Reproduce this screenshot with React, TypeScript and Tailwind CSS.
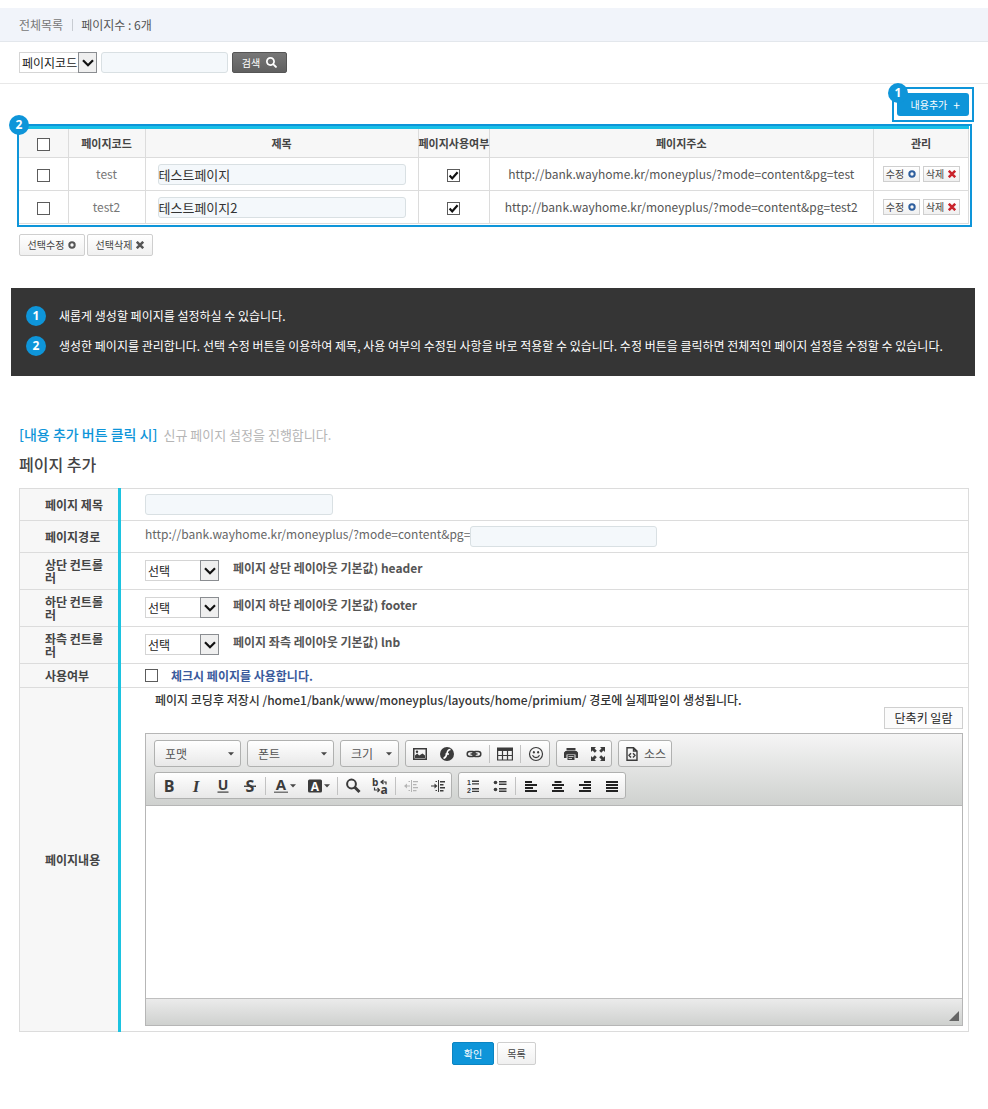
import type { ReactNode } from "react";
import { FaSearch } from "react-icons/fa";

const pages = [
  { code: "test", title: "테스트페이지" },
  { code: "test2", title: "테스트페이지2" },
];

const layouts = [
  { id: "top", label: "상단 컨트롤러", hint: "페이지 상단 레이아웃 기본값) header" },
  { id: "bottom", label: "하단 컨트롤러", hint: "페이지 하단 레이아웃 기본값) footer" },
  { id: "left", label: "좌측 컨트롤러", hint: "페이지 좌측 레이아웃 기본값) lnb" },
];

const BASE_URL = "http://bank.wayhome.kr/moneyplus/?mode=content&pg=";

const field = "h-[21px] rounded-[3px] border border-[#d9e0e3] bg-[#f4f8fb] text-[#333] outline-none";

function Badge({ n, className = "" }: { n: number; className?: string }) {
  return (
    <span
      className={`flex size-5 shrink-0 items-center justify-center rounded-full bg-[#0e95d9] font-['Open_Sans',sans-serif] text-xs font-bold text-white ${className}`}
    >
      {n}
    </span>
  );
}

function Check({ label, id, checked = false }: { label?: string; id?: string; checked?: boolean }) {
  return (
    <span className="relative inline-block size-[13px] align-middle">
      <input
        type="checkbox"
        id={id}
        aria-label={label}
        defaultChecked={checked}
        className="peer block size-[13px] appearance-none border border-[#5c5c5c] bg-white"
      />
      <svg
        viewBox="0 0 13 13"
        className="pointer-events-none absolute inset-0 hidden size-[13px] peer-checked:block"
        fill="none"
        stroke="#111"
        strokeWidth="2.2"
      >
        <path d="M2.6 6.6 5.2 9.4 10.6 3.2" />
      </svg>
    </span>
  );
}

function Select({ id, label, option, className }: { id: string; label?: string; option: string; className: string }) {
  return (
    <span className={`relative block h-[21px] shrink-0 ${className}`}>
      <select
        id={id}
        aria-label={label}
        className="block h-full w-full appearance-none border border-[#d5d5d5] bg-white pl-[2px] text-xs leading-[18px] text-[#222]"
      >
        <option>{option}</option>
      </select>
      <span className="pointer-events-none absolute inset-y-0 right-0 flex w-[19px] items-center justify-center border border-[#8a8d91] bg-[#efefef]">
        <svg viewBox="0 0 12 8" className="w-3" fill="none" stroke="#111" strokeWidth="2.2">
          <path d="M1 1.2 6 6.2 11 1.2" />
        </svg>
      </span>
    </span>
  );
}

function Ring({ className }: { className: string }) {
  return (
    <svg viewBox="0 0 8 8" className={`size-2 ${className}`} fill="none" stroke="currentColor" strokeWidth="2">
      <circle cx="4" cy="4" r="2.7" />
    </svg>
  );
}

function Cross({ className }: { className: string }) {
  return (
    <svg viewBox="0 0 8 8" className={`size-2 ${className}`} fill="none" stroke="currentColor" strokeWidth="2.5">
      <path d="M.8.8 7.2 7.2M7.2.8.8 7.2" />
    </svg>
  );
}

const lightButton =
  "flex items-center justify-center gap-1 whitespace-nowrap border border-[#cfcfcf] bg-linear-to-b from-white to-[#f0f0f0] text-[10px] text-[#444]";

function Group({ children }: { children: ReactNode }) {
  return (
    <div className="flex h-[27px] items-center rounded-[3px] border border-[#b0b1b0] bg-linear-to-b from-white to-[#e8e8e8]">
      {children}
    </div>
  );
}

function Sep() {
  return (
    <span className="flex h-[18px] w-1 justify-center">
      <span className="w-px bg-[#c2c2c2]" />
    </span>
  );
}

function Caret() {
  return (
    <svg viewBox="0 0 6 4" className="h-[4px] w-[6px] shrink-0" fill="#474747">
      <path d="M0 .3h6L3 3.6z" />
    </svg>
  );
}

function Combo({ label, className }: { label: string; className: string }) {
  return (
    <button
      type="button"
      className={`flex h-[27px] items-center justify-between rounded-[3px] border border-[#b0b1b0] bg-linear-to-b from-white to-[#e8e8e8] pr-[6px] pl-[10px] text-xs text-[#555] ${className}`}
    >
      {label}
      <Caret />
    </button>
  );
}

function Tool({ label, wide = false, children }: { label: string; wide?: boolean; children: ReactNode }) {
  return (
    <button
      type="button"
      aria-label={label}
      className={`flex h-full items-center justify-center gap-px ${wide ? "w-[34px]" : "w-[27px]"}`}
    >
      <svg viewBox="0 0 16 16" className="size-4 shrink-0 overflow-visible" fill="#3b3b3b">
        {children}
      </svg>
      {wide && <Caret />}
    </button>
  );
}

const glyph = "font-['Open_Sans',sans-serif] font-bold";

function Toolbar() {
  return (
    <div className="flex flex-col gap-[5px] border-b border-[#b6b6b6] bg-linear-to-b from-[#f5f5f5] to-[#cfd1cf] px-2 py-[6px]">
      <div className="flex flex-wrap gap-[6px]">
        <Combo label="포맷" className="w-[87px]" />
        <Combo label="폰트" className="w-[87px]" />
        <Combo label="크기" className="w-[59px]" />
        <Group>
          <Tool label="이미지">
            <path fillRule="evenodd" d="M1 2h14v12H1zM2.500 3.500v9h11v-9zM3 12l0-2.500 2.200-2 2 2 3.300-2L13 9.500V12z" />
            <circle cx="5" cy="5.700" r="1.200" />
          </Tool>
          <Tool label="플래시">
            <circle cx="8" cy="8" r="7" />
            <path d="M11.500 3.500C8.500 3.500 8.300 6 7.800 8S6.500 12 4.500 12.300M6.500 8H10" fill="none" stroke="#fff" strokeWidth="1.600" />
          </Tool>
          <Tool label="링크">
            <g fill="none" stroke="#3b3b3b" strokeWidth="1.500">
              <rect x="1.200" y="5.500" width="8" height="5" rx="2.500" />
              <rect x="6.800" y="5.500" width="8" height="5" rx="2.500" />
              <path d="M4.500 8h7" />
            </g>
          </Tool>
          <Sep />
          <Tool label="표">
            <path d="M0 1.500h16v3.500H0z" />
            <path d="M.6 5v9h14.800V5M5.500 5v9M10.500 5v9M.6 9.500h14.800" fill="none" stroke="#3b3b3b" strokeWidth="1.200" />
          </Tool>
          <Sep />
          <Tool label="이모티콘">
            <circle cx="8" cy="8" r="6.500" fill="none" stroke="#3b3b3b" strokeWidth="1.200" />
            <ellipse cx="5.900" cy="6.200" rx="1" ry="1.200" />
            <ellipse cx="10.100" cy="6.200" rx="1" ry="1.200" />
            <path d="M4.500 9.300c1.500 3 5.500 3 7 0" fill="none" stroke="#3b3b3b" strokeWidth="1.200" />
          </Tool>
        </Group>
        <Group>
          <Tool label="인쇄">
            <path d="M3.500 2h9v2.500h-9zM2.500 5h11L15 6.500V12h-2.500V8.500h-9V12H1V6.500z" />
            <path fillRule="evenodd" d="M4.500 9h7v5h-7zM5.500 10.200v.8h5v-.8zM5.500 12v.8h3.500V12z" />
          </Tool>
          <Tool label="최대화">
            <path d="M1 1h5L4.500 2.500l2.300 2.300-2 2-2.300-2.300L1 6zM15 1v5l-1.500-1.500-2.300 2.300-2-2 2.300-2.300L10 1zM1 15v-5l1.500 1.500 2.300-2.300 2 2-2.300 2.300L6 15zM15 15h-5l1.500-1.500-2.300-2.300 2-2 2.300 2.300L15 10z" />
          </Tool>
        </Group>
        <button
          type="button"
          className="flex h-[27px] items-center gap-1 rounded-[3px] border border-[#b0b1b0] bg-linear-to-b from-white to-[#e8e8e8] px-[5px] text-xs text-[#555]"
        >
          <svg viewBox="0 0 16 16" className="size-4" fill="none" stroke="#3b3b3b" strokeWidth="1.400">
            <path d="M3 1.700h6.500L13 5v9.300H3zM9.500 1.700V5H13M7 7.200 5 9.300l2 2.100M9 7.200l2 2.100-2 2.100" />
          </svg>
          소스
        </button>
      </div>
      <div className="flex flex-wrap gap-[6px]">
        <Group>
          <Tool label="굵게">
            <text x="8" y="13.500" textAnchor="middle" fontSize="16" className={glyph}>B</text>
          </Tool>
          <Tool label="기울임">
            <text x="8" y="13.500" textAnchor="middle" fontSize="17" className="font-['Liberation_Serif',serif] font-bold italic">I</text>
          </Tool>
          <Tool label="밑줄">
            <text x="8" y="12" textAnchor="middle" fontSize="14" className={glyph}>U</text>
            <path d="M2.500 13.500h11v1.200h-11z" />
          </Tool>
          <Tool label="취소선">
            <text x="8" y="13.500" textAnchor="middle" fontSize="16" className={glyph}>S</text>
            <path d="M2 7.600h12v1.300H2z" />
          </Tool>
          <Sep />
          <Tool label="글자색" wide>
            <text x="8" y="12" textAnchor="middle" fontSize="15" className={glyph}>A</text>
            <path d="M1 13.500h14V15H1z" fill="#777" />
          </Tool>
          <Tool label="배경색" wide>
            <rect x="1" y="1.500" width="14" height="13" rx="1.500" />
            <text x="8" y="12.500" textAnchor="middle" fontSize="12" fill="#fff" className={glyph}>A</text>
          </Tool>
          <Sep />
          <Tool label="찾기">
            <circle cx="6.500" cy="6" r="4.400" fill="none" stroke="#3b3b3b" strokeWidth="2" />
            <path d="m9.500 9 5 5" stroke="#3b3b3b" strokeWidth="3" />
          </Tool>
          <Tool label="바꾸기">
            <text x="0" y="8" fontSize="10" className={glyph}>b</text>
            <text x="8.500" y="15.500" fontSize="12" className={glyph}>a</text>
            <path d="M14 6.500V4H9.500M11.500 2 9 4l2.500 2M2.500 9.500V12H7M5.500 10l2 2-2 2" fill="none" stroke="#3b3b3b" strokeWidth="1.200" />
          </Tool>
          <Sep />
          <Tool label="내어쓰기">
            <path d="M8 2h1v12H8zM10 3h5v1.200h-5zM10 6h3.500v1.200H10zM10 9h5v1.200h-5zM10 12h3.500v1.200H10zM5.500 3H7v1H5.500zM5.500 12H7v1H5.500zM1 8l3-2.500v2h3v1H4v2z" fill="#b5b5b5" />
          </Tool>
          <Tool label="들여쓰기">
            <path d="M8 2h1v12H8zM10 3h5v1.400h-5zM10 6h3.500v1.400H10zM10 9h5v1.400h-5zM10 12h3.500v1.400H10zM5.500 3H7v1H5.500zM5.500 12H7v1H5.500zM7.500 8l-3-2.500v2H1v1h3.500v2z" />
          </Tool>
        </Group>
        <Group>
          <Tool label="번호 목록">
            <text x="2" y="6.500" fontSize="7" className="font-['Liberation_Sans',sans-serif] font-bold">1</text>
            <text x="2" y="15" fontSize="7" className="font-['Liberation_Sans',sans-serif] font-bold">2</text>
            <path d="M7 2.500h7v1.400H7zM7 5.200h7v1.400H7zM7 10h7v1.400H7zM7 12.700h7v1.400H7z" />
          </Tool>
          <Tool label="글머리 목록">
            <circle cx="3.500" cy="4.500" r="1.800" />
            <circle cx="3.500" cy="11.500" r="1.800" />
            <path d="M7 3h7.500v1.400H7zM7 5.500h7.500v1.400H7zM7 10h7.500v1.400H7zM7 12.500h7.500v1.400H7z" />
          </Tool>
          <Sep />
          <Tool label="왼쪽 정렬">
            <path d="M2 3h7v2H2zM2 6h12v2H2zM2 9h8v2H2zM2 12h12v2H2z" fill="#222" />
          </Tool>
          <Tool label="가운데 정렬">
            <path d="M4.500 3h7v2h-7zM2 6h12v2H2zM4 9h8v2H4zM2 12h12v2H2z" fill="#222" />
          </Tool>
          <Tool label="오른쪽 정렬">
            <path d="M7 3h7v2H7zM2 6h12v2H2zM6 9h8v2H6zM2 12h12v2H2z" fill="#222" />
          </Tool>
          <Tool label="양쪽 정렬">
            <path d="M2 3h12v2H2zM2 6h12v2H2zM2 9h12v2H2zM2 12h12v2H2z" fill="#222" />
          </Tool>
        </Group>
      </div>
    </div>
  );
}

function FormRow({ label, htmlFor, height, children }: { label: string; htmlFor: string; height: string; children: ReactNode }) {
  return (
    <tr className={`${height} border-b border-[#dcdcdc]`}>
      <th
        scope="row"
        className="border-r-3 border-[#1cc3e0] bg-[#f7f7f7] py-0 pr-[11px] pl-[25px] text-left align-middle leading-[13px] font-bold text-[#444]"
      >
        <label htmlFor={htmlFor}>{label}</label>
      </th>
      <td className="py-0 pr-[5px] pl-6 align-top">{children}</td>
    </tr>
  );
}

export default function App() {
  const headCell = "border-r border-[#dcdcdc] font-bold whitespace-nowrap text-[11px] text-[#444]";
  const bodyCell = "border-r border-[#dcdcdc]";

  return (
    <main className="bg-white pt-2 pb-11 font-['Noto_Sans_CJK_KR',sans-serif] text-xs text-[#555]">
      <header className="flex h-[34px] items-center border-b border-[#e3e7ec] bg-[#f1f4fa] px-[19px] leading-4">
        <span className="border-r border-[#c8ccd2] pr-[9px] leading-3 text-[#777]">전체목록</span>
        <span className="pl-2">페이지수 : 6개</span>
      </header>

      <form className="flex h-[42px] items-center border-b border-[#e8e8e8] px-[19px]">
        <Select id="search-type" label="검색 조건" option="페이지코드" className="w-[78px]" />
        <input type="text" aria-label="검색어" className={`${field} mr-1 ml-1 w-[127px]`} />
        <button
          type="button"
          className="flex h-[21px] w-[55px] items-center justify-center gap-[6px] rounded-xs border border-[#555] bg-linear-to-b from-[#777] to-[#606060] text-[10px] text-white"
        >
          검색
          <FaSearch className="size-[11px]" />
        </button>
      </form>

      <div className="mt-[3px] flex justify-end px-[14px]">
        <div className="relative border-2 border-[#0e95d9] px-[3px] py-1">
          <button
            type="button"
            className="flex h-[23px] w-[72px] items-center justify-end gap-[6px] rounded-[3px] bg-[#0e95d9] pr-[9px] text-[10px] text-white"
          >
            내용추가 <span className="text-xs leading-3">+</span>
          </button>
          <Badge n={1} className="absolute -top-[6px] -left-[6px]" />
        </div>
      </div>

      <div className="relative mt-[2px] mr-4 ml-[17px] border-2 border-[#0e95d9] pr-px pb-px">
        <table className="w-full table-fixed border-collapse text-center">
          <colgroup>
            <col className="w-[49px]" />
            <col className="w-[77px]" />
            <col className="w-[273px]" />
            <col className="w-[71px]" />
            <col />
            <col className="w-[95px]" />
          </colgroup>
          <thead>
            <tr className="h-[30px] border-t-3 border-b border-t-[#18c0e6] border-b-[#dcdcdc] bg-[#f7f7f7]">
              <th className={headCell}><Check label="전체 선택" /></th>
              <th className={headCell}>페이지코드</th>
              <th className={headCell}>제목</th>
              <th className={headCell}>페이지사용여부</th>
              <th className={headCell}>페이지주소</th>
              <th className={headCell}>관리</th>
            </tr>
          </thead>
          <tbody>
            {pages.map((p) => (
              <tr key={p.code} className="h-[33px] border-b border-[#dcdcdc]">
                <td className={bodyCell}><Check label={`${p.code} 선택`} /></td>
                <td className={`${bodyCell} text-[#777]`}>{p.code}</td>
                <td className={`${bodyCell} px-3`}>
                  <input type="text" aria-label="제목" defaultValue={p.title} className={`${field} block w-full text-[13px]`} />
                </td>
                <td className={bodyCell}><Check label="페이지사용여부" checked /></td>
                <td className={`${bodyCell} text-[#555]`}>{BASE_URL}{p.code}</td>
                <td className={bodyCell}>
                  <div className="flex justify-center gap-[3px]">
                    <button type="button" className={`${lightButton} h-4 w-[37px]`}>
                      수정<Ring className="text-[#2f5f9e]" />
                    </button>
                    <button type="button" className={`${lightButton} h-4 w-[37px]`}>
                      삭제<Cross className="text-[#c9232b]" />
                    </button>
                  </div>
                </td>
              </tr>
            ))}
          </tbody>
        </table>
        <Badge n={2} className="absolute -top-[11px] -left-[10px]" />
      </div>

      <div className="mt-[7px] flex gap-[2px] px-[19px]">
        <button type="button" className={`${lightButton} h-[22px] w-[66px] rounded-xs`}>
          선택수정<Ring className="text-[#555]" />
        </button>
        <button type="button" className={`${lightButton} h-[22px] w-[66px] rounded-xs`}>
          선택삭제<Cross className="text-[#555]" />
        </button>
      </div>

      <ol className="mt-8 mr-[13px] ml-[11px] flex flex-col gap-[10px] bg-[#353535] px-[15px] pt-[18px] pb-5 text-white">
        <li className="flex items-center gap-[13px]">
          <Badge n={1} />
          <span className="leading-5">새롭게 생성할 페이지를 설정하실 수 있습니다.</span>
        </li>
        <li className="flex items-center gap-[13px]">
          <Badge n={2} />
          <span className="leading-5">
            생성한 페이지를 관리합니다. 선택 수정 버튼을 이용하여 제목, 사용 여부의 수정된 사항을 바로 적용할 수 있습니다. 수정 버튼을 클릭하면 전체적인 페이지 설정을 수정할 수 있습니다.
          </span>
        </li>
      </ol>

      <section className="px-[19px] pt-[46px]">
        <p className="flex items-baseline gap-[6px] leading-6">
          <span className="text-sm leading-6 font-medium text-[#0e95d9]">[내용 추가 버튼 클릭 시]</span>
          <span className="text-[13px] text-[#b5b5b5]">신규 페이지 설정을 진행합니다.</span>
        </p>
        <h2 className="mt-[5px] mb-3 text-base leading-6 font-medium text-[#444]">페이지 추가</h2>

        <table className="w-full table-fixed border-collapse border border-[#dcdcdc]">
          <colgroup>
            <col className="w-[100px]" />
            <col />
          </colgroup>
          <tbody>
            <FormRow label="페이지 제목" htmlFor="page-title" height="h-8">
              <input id="page-title" type="text" className={`${field} mt-[5px] block w-[188px]`} />
            </FormRow>
            <FormRow label="페이지경로" htmlFor="page-path" height="h-8">
              <div className="flex items-start pt-[5px] text-[#666]">
                <span className="leading-4">{BASE_URL}</span>
                <input id="page-path" type="text" className={`${field} w-[187px]`} />
              </div>
            </FormRow>
            {layouts.map((l) => (
              <FormRow key={l.id} label={l.label} htmlFor={l.id} height="h-[37px]">
                <div className="flex items-start gap-[14px] pt-[7px]">
                  <Select id={l.id} option="선택" className="w-[74px]" />
                  <span className="leading-4 font-bold text-[#555]">{l.hint}</span>
                </div>
              </FormRow>
            ))}
            <FormRow label="사용여부" htmlFor="page-use" height="h-6">
              <div className="flex h-[23px] items-center gap-[13px]">
                <Check id="page-use" />
                <span className="font-bold text-[#3a5a9c]">체크시 페이지를 사용합니다.</span>
              </div>
            </FormRow>
            <FormRow label="페이지내용" htmlFor="page-content" height="h-[344px]">
              <div className="flex items-start justify-between pt-[2px] pl-[10px]">
                <span className="leading-5 font-medium text-[#333]">
                  페이지 코딩후 저장시 /home1/bank/www/moneyplus/layouts/home/primium/ 경로에 실제파일이 생성됩니다.
                </span>
                <button
                  type="button"
                  className="mt-[17px] h-[22px] w-[79px] shrink-0 border border-[#cfcfcf] bg-[#fbfbfb] text-xs text-[#222]"
                >
                  단축키 일람
                </button>
              </div>
              <div className="mt-1 mb-1 border border-[#b6b6b6]">
                <Toolbar />
                <textarea id="page-content" className="block h-[192px] w-full resize-none bg-white p-2 outline-none" />
                <div className="flex h-[27px] items-end justify-end border-t border-[#bfbfbf] bg-linear-to-b from-[#ebebeb] to-[#cfd1cf] pr-[3px] pb-1">
                  <svg viewBox="0 0 10 10" className="size-[10px]" fill="#666">
                    <path d="M10 0v10H0z" />
                  </svg>
                </div>
              </div>
            </FormRow>
          </tbody>
        </table>

        <div className="mt-[10px] flex justify-center gap-[3px]">
          <button type="button" className="h-[23px] w-[42px] rounded-xs border border-[#0b84c2] bg-[#0e95d9] text-[10px] text-white">
            확인
          </button>
          <button type="button" className={`${lightButton} h-[23px] w-[39px] rounded-xs`}>
            목록
          </button>
        </div>
      </section>
    </main>
  );
}
